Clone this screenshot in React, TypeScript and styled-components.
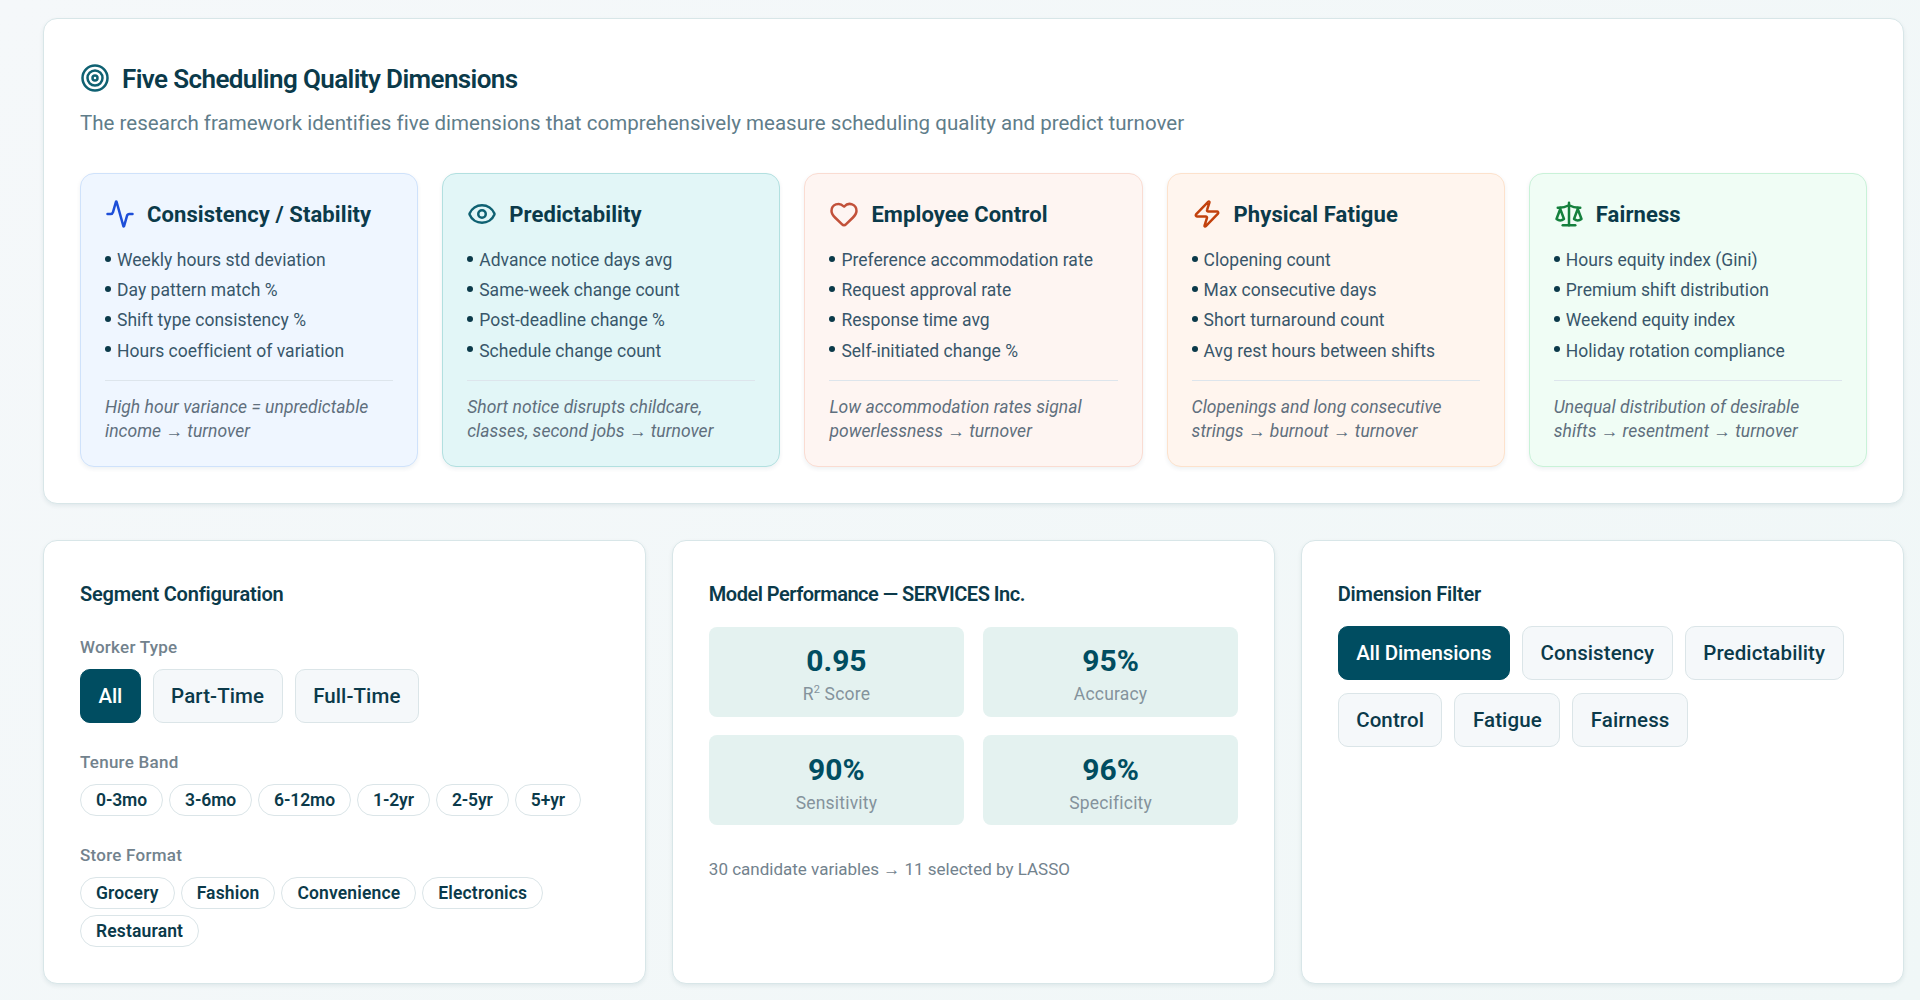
import React from "react";
import styled, { createGlobalStyle } from "styled-components";
import { Target, Activity, Eye, Heart, Zap, Scale } from "lucide-react";

const Global = createGlobalStyle`
  html, body { margin: 0; padding: 0; }
  body { background: #f3f8f8; font-family: Roboto, "Liberation Sans", sans-serif; color: #0b3a4a; }
  * { box-sizing: border-box; }
`;

const Page = styled.div`
  width: 1920px;
  height: 1000px;
  overflow: hidden;
  padding: 18px 16px 14px 43px;
  background: linear-gradient(135deg, #f5f8fa 0%, #f0f7f7 100%);
  display: flex;
  flex-direction: column;
  gap: 36.5px;
`;

const Panel = styled.section`
  background: #fff;
  border: 1px solid #d8e6e8;
  border-radius: 14px;
  box-shadow: 0 2px 4px rgba(0, 60, 80, 0.08);
  padding: 36px;
`;

const TitleRow = styled.div`
  display: flex;
  align-items: center;
  gap: 12px;
  height: 48px;
  color: #0f6172;
`;

const TitleIcon = styled(Target)`
  margin-top: -2px;
`;

const MainTitle = styled.h2`
  margin: 0;
  font-size: 26px;
  font-weight: 600;
  letter-spacing: -0.61px;
  color: #0b3a4a;
`;

const Subtitle = styled.p`
  margin: 6px 0 0;
  font-size: 20.5px;
  line-height: 28px;
  color: #5f7d8a;
  letter-spacing: 0.02px;
`;

const DimGrid = styled.div`
  display: grid;
  grid-template-columns: repeat(5, 1fr);
  gap: 24px;
  margin-top: 36px;
`;

const DimCard = styled.article<{ $bg: string; $line: string }>`
  height: 293.5px;
  background: ${(p) => p.$bg};
  border: 1px solid ${(p) => p.$line};
  border-radius: 14px;
  box-shadow: 0 2px 4px rgba(0, 60, 80, 0.07);
  padding: 24px;
`;

const DimHead = styled.div<{ $color: string }>`
  display: flex;
  align-items: center;
  gap: 12px;
  height: 32px;
  color: ${(p) => p.$color};
`;

const DimTitle = styled.h3`
  margin: 0;
  font-size: 22px;
  font-weight: 700;
  letter-spacing: 0.1px;
  color: #0b3a4a;
`;

const Metrics = styled.ul`
  list-style: none;
  margin: 15px 0 0;
  padding: 0;
`;

const Metric = styled.li`
  display: flex;
  align-items: center;
  height: 30.2px;
  font-size: 17.5px;
  color: #38566a;
  letter-spacing: 0.03px;
  &::before {
    content: "";
    flex: none;
    width: 6px;
    height: 6px;
    margin-right: 6px;
    margin-top: -3px;
    border-radius: 50%;
    background: #0b3a4a;
  }
`;

const Note = styled.p`
  margin: 14px 0 0;
  padding-top: 14px;
  border-top: 1.5px solid #dde5ec;
  font-size: 17.5px;
  line-height: 24.5px;
  font-style: italic;
  color: #5f6f7d;
  letter-spacing: 0.03px;
`;

const Columns = styled.div`
  display: grid;
  grid-template-columns: repeat(3, 1fr);
  gap: 25.5px;
  height: 444px;
`;

const SectionTitle = styled.h3<{ $tight?: boolean }>`
  margin: 0;
  height: 34px;
  display: flex;
  align-items: center;
  font-size: 20px;
  font-weight: 600;
  letter-spacing: ${(p) => (p.$tight ? "-0.5px" : "-0.2px")};
  color: #0b3a4a;
`;

const Label = styled.div<{ $top: number }>`
  margin-top: ${(p) => p.$top}px;
  height: 22px;
  line-height: 22px;
  font-size: 17px;
  font-weight: 500;
  letter-spacing: 0.25px;
  color: #72828d;
`;

const Wrap = styled.div<{ $top: number; $row: number; $col: number }>`
  display: flex;
  flex-wrap: wrap;
  margin-top: ${(p) => p.$top}px;
  gap: ${(p) => p.$row}px ${(p) => p.$col}px;
`;

const Btn = styled.button<{ $on?: boolean }>`
  height: 54px;
  padding: 0 17.5px;
  border-radius: 10px;
  border: 1.5px solid ${(p) => (p.$on ? "#004d61" : "#dbe5e8")};
  background: ${(p) => (p.$on ? "#004d61" : "#f5f8fa")};
  color: ${(p) => (p.$on ? "#fff" : "#0b3a4a")};
  font-family: inherit;
  font-size: 20.5px;
  font-weight: 500;
  letter-spacing: ${(p) => (p.$on ? "-0.15px" : "0.1px")};
`;

const Pill = styled.button<{ $dense?: boolean }>`
  height: 32px;
  padding: 0 15px;
  border-radius: 16px;
  border: 1.5px solid #dbe5e8;
  background: #fff;
  color: #0b3a4a;
  font-family: inherit;
  font-size: 17.5px;
  font-weight: 600;
  letter-spacing: ${(p) => (p.$dense ? "-0.1px" : "0.15px")};
`;

const Stats = styled.div`
  display: grid;
  grid-template-columns: 1fr 1fr;
  gap: 18.6px 19px;
  margin-top: 15.5px;
`;

const Stat = styled.div`
  height: 90px;
  background: #e4f2f0;
  border-radius: 8px;
  display: flex;
  flex-direction: column;
  align-items: center;
  padding-top: 16.5px;
`;

const StatValue = styled.div`
  height: 36px;
  line-height: 36px;
  font-size: 30px;
  font-weight: 700;
  color: #004d61;
`;

const StatLabel = styled.div`
  height: 24px;
  line-height: 24px;
  margin-top: 3px;
  font-size: 17.5px;
  letter-spacing: 0.2px;
  color: #84939c;
`;

const Sup = styled.sup`
  font-size: 11px;
  line-height: 0;
`;

const Foot = styled.p`
  margin: 32px 0 0;
  line-height: 24px;
  font-size: 17px;
  color: #72828d;
`;

const dims = [
  { t: "Consistency / Stability", I: Activity, c: "#1d4ed8", bg: "#eff6ff", line: "#cfe2fb",
    m: ["Weekly hours std deviation", "Day pattern match %", "Shift type consistency %", "Hours coefficient of variation"],
    n: ["High hour variance = unpredictable", "income → turnover"] },
  { t: "Predictability", I: Eye, c: "#0f6172", bg: "#e2f6f7", line: "#b2e0e0",
    m: ["Advance notice days avg", "Same-week change count", "Post-deadline change %", "Schedule change count"],
    n: ["Short notice disrupts childcare,", "classes, second jobs → turnover"] },
  { t: "Employee Control", I: Heart, c: "#c2513a", bg: "#fef5f2", line: "#fadcd2",
    m: ["Preference accommodation rate", "Request approval rate", "Response time avg", "Self-initiated change %"],
    n: ["Low accommodation rates signal", "powerlessness → turnover"] },
  { t: "Physical Fatigue", I: Zap, c: "#c2410c", bg: "#fff5ee", line: "#fde2cc",
    m: ["Clopening count", "Max consecutive days", "Short turnaround count", "Avg rest hours between shifts"],
    n: ["Clopenings and long consecutive", "strings → burnout → turnover"] },
  { t: "Fairness", I: Scale, c: "#15803d", bg: "#f0fdf5", line: "#c9f2d8",
    m: ["Hours equity index (Gini)", "Premium shift distribution", "Weekend equity index", "Holiday rotation compliance"],
    n: ["Unequal distribution of desirable", "shifts → resentment → turnover"] },
];

export default function App() {
  return (
    <Page>
      <Global />
      <Panel>
        <TitleRow>
          <TitleIcon size={30} strokeWidth={2} />
          <MainTitle>Five Scheduling Quality Dimensions</MainTitle>
        </TitleRow>
        <Subtitle>The research framework identifies five dimensions that comprehensively measure scheduling quality and predict turnover</Subtitle>
        <DimGrid>
          {dims.map((d) => (
            <DimCard key={d.t} $bg={d.bg} $line={d.line}>
              <DimHead $color={d.c}>
                <d.I size={30} strokeWidth={2} />
                <DimTitle>{d.t}</DimTitle>
              </DimHead>
              <Metrics>
                {d.m.map((x) => <Metric key={x}>{x}</Metric>)}
              </Metrics>
              <Note>{d.n[0]}<br />{d.n[1]}</Note>
            </DimCard>
          ))}
        </DimGrid>
      </Panel>
      <Columns>
        <Panel>
          <SectionTitle>Segment Configuration</SectionTitle>
          <Label $top={25}>Worker Type</Label>
          <Wrap $top={11} $row={12} $col={12}>
            <Btn $on>All</Btn><Btn>Part-Time</Btn><Btn>Full-Time</Btn>
          </Wrap>
          <Label $top={27.7}>Tenure Band</Label>
          <Wrap $top={11} $row={6} $col={6}>
            {["0-3mo", "3-6mo", "6-12mo", "1-2yr", "2-5yr", "5+yr"].map((x) => <Pill key={x} $dense>{x}</Pill>)}
          </Wrap>
          <Label $top={28.3}>Store Format</Label>
          <Wrap $top={11} $row={6} $col={6}>
            {["Grocery", "Fashion", "Convenience", "Electronics", "Restaurant"].map((x) => <Pill key={x}>{x}</Pill>)}
          </Wrap>
        </Panel>
        <Panel>
          <SectionTitle $tight>Model Performance — SERVICES Inc.</SectionTitle>
          <Stats>
            <Stat><StatValue>0.95</StatValue><StatLabel>R<Sup>2</Sup> Score</StatLabel></Stat>
            <Stat><StatValue>95%</StatValue><StatLabel>Accuracy</StatLabel></Stat>
            <Stat><StatValue>90%</StatValue><StatLabel>Sensitivity</StatLabel></Stat>
            <Stat><StatValue>96%</StatValue><StatLabel>Specificity</StatLabel></Stat>
          </Stats>
          <Foot>30 candidate variables → 11 selected by LASSO</Foot>
        </Panel>
        <Panel>
          <SectionTitle>Dimension Filter</SectionTitle>
          <Wrap $top={15} $row={12.6} $col={12}>
            <Btn $on>All Dimensions</Btn>
            {["Consistency", "Predictability", "Control", "Fatigue", "Fairness"].map((x) => <Btn key={x}>{x}</Btn>)}
          </Wrap>
        </Panel>
      </Columns>
    </Page>
  );
}
